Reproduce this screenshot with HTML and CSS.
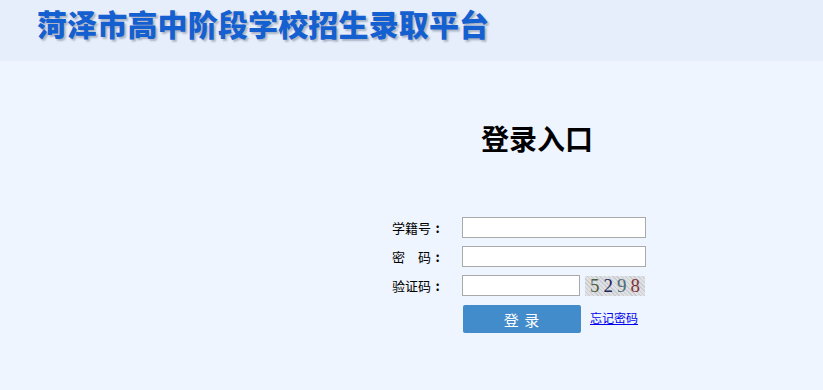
FILE: index.html
```html
<!DOCTYPE html>
<html lang="zh-CN">
<head>
<meta charset="utf-8">
<title>菏泽市高中阶段学校招生录取平台</title>
<link rel="stylesheet" href="styles.css">
</head>
<body>
<header class="top">
  <h1 class="site-title">菏泽市高中阶段学校招生录取平台</h1>
</header>
<main class="main">
  <section class="login">
    <h2 class="login-title">登录入口</h2>
    <form class="form">
      <div class="row">
        <label class="label">学籍号<span class="colon">:</span></label>
        <input class="field" type="text">
      </div>
      <div class="row">
        <label class="label">密&emsp;码<span class="colon">:</span></label>
        <input class="field" type="password">
      </div>
      <div class="row">
        <label class="label">验证码<span class="colon">:</span></label>
        <input class="field short" type="text">
        <span class="captcha"><span class="d1">5</span><span class="d2">2</span><span class="d3">9</span><span class="d4">8</span></span>
      </div>
      <div class="row actions">
        <span class="label"></span>
        <button class="btn" type="button">登 录</button>
        <a class="forgot" href="#">忘记密码</a>
      </div>
    </form>
  </section>
</main>
</body>
</html>
```

FILE: styles.css
```css
* { box-sizing: border-box; }
html, body { margin: 0; padding: 0; }
body {
  width: 823px;
  height: 390px;
  overflow: hidden;
  background: #eef5fe;
  font-family: "Noto Sans CJK SC", "Noto Sans", sans-serif;
  color: #000;
}
.top {
  height: 61px;
  background: #e7eefb;
  padding-left: 37px;
  display: flex;
  align-items: flex-start;
}
.site-title {
  margin: 8px 0 0 0;
  font-size: 30px;
  line-height: 31px;
  font-weight: 900;
  color: #1560d0;
  letter-spacing: 0.15px;
  text-shadow: 2px 2px 2px #aab3c4;
}
.main {
  padding-top: 62px;
}
.login {
  margin-left: 392px;
  width: 290px;
}
.login-title {
  margin: 0;
  text-align: center;
  font-size: 28px;
  line-height: 30px;
  font-weight: 700;
}
.form {
  margin-top: 64px;
  display: flex;
  flex-direction: column;
  gap: 8px;
}
.row {
  display: flex;
  align-items: center;
  height: 21px;
}
.label {
  width: 70px;
  font-size: 13px;
  line-height: 21px;
  flex: none;
}
.colon {
  display: inline-block;
  width: 13px;
  text-align: center;
  font-weight: 700;
}
.field {
  width: 184px;
  height: 21px;
  border: 1px solid #a9a9a9;
  background: #fff;
  padding: 0 3px;
  margin: 0;
  outline: none;
}
.field.short { width: 118px; }
.captcha {
  margin-left: 5px;
  width: 60px;
  height: 20px;
  background: repeating-linear-gradient(45deg, #c9ccd0 0 1px, #dfe1e4 1px 3px), #d8dadd;
  display: flex;
  align-items: center;
  justify-content: center;
  gap: 4px;
  font-family: "Liberation Serif", serif;
  font-size: 19px;
  line-height: 20px;
}
.d1 { color: #4f5e40; }
.d2 { color: #1c2459; }
.d3 { color: #4d6e78; }
.d4 { color: #7f3434; }
.actions {
  height: 28px;
  margin-top: 1px;
}
.btn {
  width: 118px;
  height: 28px;
  margin: 0 0 0 1px;
  border: none;
  border-radius: 2px;
  background: #438ccb;
  color: #fff;
  font-family: "Noto Sans CJK SC", sans-serif;
  font-size: 15px;
  letter-spacing: 1px;
  padding: 0;
  cursor: pointer;
}
.forgot {
  margin-left: 9px;
  margin-top: -2px;
  font-size: 12px;
  line-height: 14px;
  color: #0000ee;
  text-decoration: underline;
}
```
